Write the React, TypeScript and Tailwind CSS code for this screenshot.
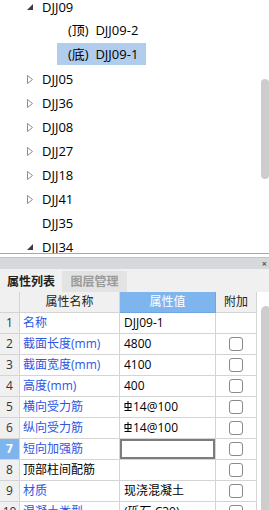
import React from 'react'

const font = { fontFamily: '"Open Sans", "Noto Sans CJK SC", sans-serif' }

type TreeItem = { label: string; level: 0 | 1; state: 'open' | 'closed' | 'leaf'; selected?: boolean }

const tree: TreeItem[] = [
  { label: 'DJJ09', level: 0, state: 'open' },
  { label: '(顶)  DJJ09-2', level: 1, state: 'leaf' },
  { label: '(底)  DJJ09-1', level: 1, state: 'leaf', selected: true },
  { label: 'DJJ05', level: 0, state: 'closed' },
  { label: 'DJJ36', level: 0, state: 'closed' },
  { label: 'DJJ08', level: 0, state: 'closed' },
  { label: 'DJJ27', level: 0, state: 'closed' },
  { label: 'DJJ18', level: 0, state: 'closed' },
  { label: 'DJJ41', level: 0, state: 'closed' },
  { label: 'DJJ35', level: 0, state: 'leaf' },
  { label: 'DJJ34', level: 0, state: 'open' },
]

type Row = { name: string; value: string; rebar?: boolean; plain?: boolean; editing?: boolean; noBox?: boolean }

const rows: Row[] = [
  { name: '名称', value: 'DJJ09-1', noBox: true },
  { name: '截面长度(mm)', value: '4800' },
  { name: '截面宽度(mm)', value: '4100' },
  { name: '高度(mm)', value: '400' },
  { name: '横向受力筋', value: '14@100', rebar: true },
  { name: '纵向受力筋', value: '14@100', rebar: true },
  { name: '短向加强筋', value: '', editing: true },
  { name: '顶部柱间配筋', value: '', plain: true },
  { name: '材质', value: '现浇混凝土' },
  { name: '混凝土类型', value: '(砾石 C30)' },
]

function Arrow({ state }: { state: TreeItem['state'] }) {
  if (state === 'open')
    return (
      <svg width="6" height="6" viewBox="0 0 6 6">
        <polygon points="6,0 6,6 0,6" fill="#3c3c3c" />
      </svg>
    )
  if (state === 'closed')
    return (
      <svg width="6" height="9" viewBox="0 0 6 9">
        <polygon points="0.5,0.5 5.5,4.5 0.5,8.5" fill="none" stroke="#8c8c8c" strokeWidth="1" />
      </svg>
    )
  return null
}

function Rebar() {
  return (
    <svg width="8" height="10" viewBox="0 0 8 10" className="mr-[1px] -mt-[3px]">
      <line x1="4" y1="0" x2="4" y2="9" stroke="#000" strokeWidth="1" />
      <rect x="1" y="2.5" width="6" height="4" fill="none" stroke="#000" strokeWidth="1" />
      <line x1="0.5" y1="9.5" x2="7.5" y2="9.5" stroke="#000" strokeWidth="1" />
    </svg>
  )
}

export default function App() {
  return (
    <div className="w-[269px] h-[510px] overflow-hidden bg-white flex flex-col text-[12px] text-black" style={font}>
      {/* Tree */}
      <div className="relative h-[254px] shrink-0 overflow-hidden border-b border-[#a8a8a8] text-[13px]">
        <div className="-mt-[5px]">
          {tree.map((t, i) => (
            <div key={i} className="h-[24px] flex items-start">
              {t.level === 0 ? (
                <div className="flex items-center h-[24px] pl-[27px]">
                  <span className="w-[15px] flex items-center">
                    <Arrow state={t.state} />
                  </span>
                  <span className="leading-none">{t.label}</span>
                </div>
              ) : (
                <div
                  className={`ml-[57px] w-[89px] h-[22px] flex items-center pl-[11px] pt-[1px] whitespace-pre ${
                    t.selected ? 'bg-[#b1cdee]' : ''
                  }`}
                >
                  {t.label}
                </div>
              )}
            </div>
          ))}
        </div>
        <div className="absolute right-0 top-[79px] w-[8px] h-[100px] rounded-full bg-[#cdcdcd]" />
      </div>

      <div className="h-[3px] shrink-0 bg-white" />

      {/* Panel title band */}
      <div className="h-[12px] shrink-0 bg-[#d6d8db] border-t border-[#c2c4c7] flex items-center justify-end pr-[2px]">
        <span className="text-[9px] leading-none text-[#555] font-bold">×</span>
      </div>

      {/* Tabs */}
      <div className="h-[23px] shrink-0 bg-[#f0f0f0] flex items-end">
        <div className="w-[62px] h-[21px] flex items-center justify-center font-bold text-[#222]">属性列表</div>
        <div className="w-[65px] h-[21px] flex items-center justify-center bg-[#e3e3e3] text-[#9a9a9a] font-bold">
          图层管理
        </div>
      </div>

      {/* Table */}
      <div className="flex flex-1 overflow-hidden">
        <div className="w-[257px] shrink-0">
          <div className="grid grid-cols-[20px_100px_96px_41px] h-[21px]">
            <div className="bg-[#f0f0f0] border-r border-b border-[#d4d4d4]" />
            <div className="bg-[#f0f0f0] border-r border-b border-[#d4d4d4] flex items-center justify-center text-[#222]">
              属性名称
            </div>
            <div className="bg-[#7fb5ef] border-r border-b border-[#6ea6e2] flex items-center justify-center text-white">
              属性值
            </div>
            <div className="bg-[#f0f0f0] border-r border-b border-[#d4d4d4] flex items-center justify-center text-[#222]">
              附加
            </div>
          </div>
          {rows.map((r, i) => (
            <div key={i} className="grid grid-cols-[20px_100px_96px_41px] h-[21px]">
              <div
                className={`border-r border-b border-[#d4d4d4] flex items-center justify-center ${
                  r.editing ? 'bg-[#7fb5ef] text-white font-bold' : 'bg-[#f0f0f0] text-[#333]'
                }`}
              >
                {i + 1}
              </div>
              <div
                className={`border-r border-b border-[#d4d4d4] flex items-center pl-[3px] whitespace-nowrap ${
                  r.plain ? 'text-black' : 'text-[#2c56e4]'
                }`}
              >
                {r.name}
              </div>
              <div className="border-r border-b border-[#d4d4d4] flex items-center pl-[4px] whitespace-nowrap">
                {r.editing ? (
                  <div className="-ml-[4px] w-[95px] h-[20px] border-2 border-[#7d7d7d]" />
                ) : (
                  <>
                    {r.rebar && <Rebar />}
                    {r.value}
                  </>
                )}
              </div>
              <div className="border-r border-b border-[#d4d4d4] flex items-center justify-center">
                {!r.noBox && <div className="w-[14px] h-[14px] rounded-[3px] border border-[#8a8a8a] bg-white" />}
              </div>
            </div>
          ))}
        </div>
        <div className="flex-1 overflow-hidden pl-[4px] pt-[14px]">
          <div className="w-[10px] h-[300px] rounded-t-full bg-[#cdcdcd]" />
        </div>
      </div>
    </div>
  )
}
